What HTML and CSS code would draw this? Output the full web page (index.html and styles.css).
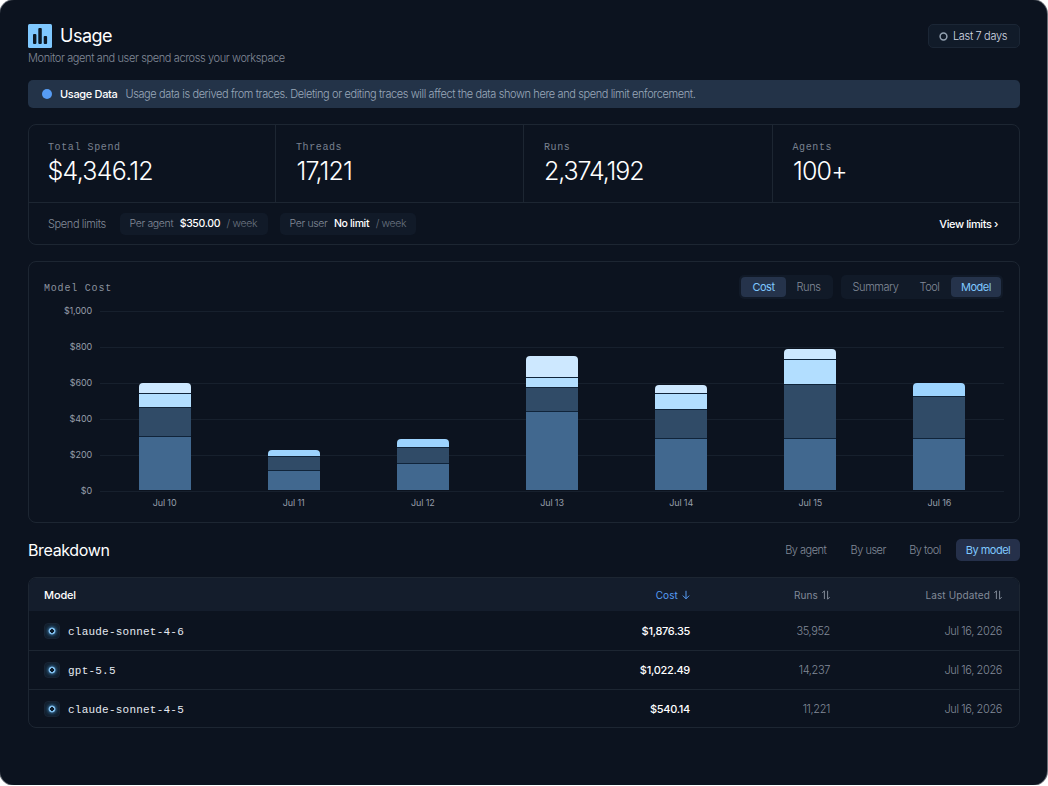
FILE: index.html
```html
<!DOCTYPE html>
<html lang="en">
<head>
<meta charset="utf-8">
<title>Usage</title>
<link rel="stylesheet" href="styles.css">
</head>
<body>
<main class="app">
  <header class="page-head">
    <div>
      <div class="title-row">
        <svg class="logo" viewBox="0 0 24 24"><rect width="24" height="24" rx="1.5" fill="#7fc8ff"/><g fill="#0b1825"><rect x="5" y="10" width="3.4" height="10" rx="1"/><rect x="10.3" y="4" width="3.5" height="16" rx="1"/><rect x="15.7" y="12" width="3.4" height="8" rx="1"/></g></svg>
        <h1 class="title">Usage</h1>
      </div>
      <p class="subtitle">Monitor agent and user spend across your workspace</p>
    </div>
    <button class="range"><svg class="ring" viewBox="0 0 9 9"><circle cx="4.5" cy="4.5" r="3.4"/></svg>Last 7 days</button>
  </header>

  <section class="banner"><i class="dot"></i><b>Usage Data</b><span>Usage data is derived from traces. Deleting or editing traces will affect the data shown here and spend limit enforcement.</span></section>

  <section class="card stats">
    <div class="stat-grid">
      <div class="stat"><div class="label">Total Spend</div><div class="value">$4,346.12</div></div>
      <div class="stat"><div class="label">Threads</div><div class="value">17,121</div></div>
      <div class="stat"><div class="label">Runs</div><div class="value tight">2,374,192</div></div>
      <div class="stat"><div class="label">Agents</div><div class="value">100+</div></div>
    </div>
    <div class="limits">
      <span class="limits-label">Spend limits</span>
      <div class="chip chip-agent"><span>Per agent</span><b>$350.00</b><em>/ week</em></div>
      <div class="chip chip-user"><span>Per user</span><b>No limit</b><em>/ week</em></div>
      <a class="view">View limits ›</a>
    </div>
  </section>

  <section class="card chart-card">
    <div class="chart-head">
      <h2 class="chart-title">Model Cost</h2>
      <div class="seg seg-metric"><span class="on">Cost</span><span>Runs</span></div>
      <div class="seg seg-group"><span>Summary</span><span>Tool</span><span class="on">Model</span></div>
    </div>
    <div class="chart">
      <div class="axis"><span>$1,000</span><span>$800</span><span>$600</span><span>$400</span><span>$200</span><span>$0</span></div>
      <div class="plot">
        <div class="col"><div class="bar"><i class="s4" style="height:10px"></i><i class="s3" style="height:14px"></i><i class="s2" style="height:29px"></i><i class="s1" style="height:54px"></i></div><span>Jul 10</span></div>
        <div class="col"><div class="bar"><i class="s0" style="height:6.5px"></i><i class="s2" style="height:14px"></i><i class="s1" style="height:20px"></i></div><span>Jul 11</span></div>
        <div class="col"><div class="bar"><i class="s0" style="height:8.5px"></i><i class="s2" style="height:16px"></i><i class="s1" style="height:27px"></i></div><span>Jul 12</span></div>
        <div class="col"><div class="bar"><i class="s4" style="height:21px"></i><i class="s3" style="height:10px"></i><i class="s2" style="height:24px"></i><i class="s1" style="height:79px"></i></div><span>Jul 13</span></div>
        <div class="col"><div class="bar"><i class="s4" style="height:8.5px"></i><i class="s3" style="height:16px"></i><i class="s2" style="height:29px"></i><i class="s1" style="height:52px"></i></div><span>Jul 14</span></div>
        <div class="col"><div class="bar"><i class="s4" style="height:10.5px"></i><i class="s3" style="height:25px"></i><i class="s2" style="height:54px"></i><i class="s1" style="height:52px"></i></div><span>Jul 15</span></div>
        <div class="col"><div class="bar"><i class="s0" style="height:13.5px"></i><i class="s2" style="height:42px"></i><i class="s1" style="height:52px"></i></div><span>Jul 16</span></div>
      </div>
    </div>
  </section>

  <div class="break-head">
    <h2 class="break-title">Breakdown</h2>
    <nav class="tabs"><span>By agent</span><span>By user</span><span>By tool</span><span class="on">By model</span></nav>
  </div>

  <section class="card table">
    <div class="row thead">
      <b>Model</b>
      <span class="cost sorted">Cost<svg class="arrow" viewBox="0 0 8 10"><path d="M4 .8v8M.8 5.6L4 8.8l3.2-3.2"/></svg></span>
      <span class="runs">Runs<svg class="arrow" viewBox="0 0 8 10"><path d="M2.4 9V.8M.3 2.9L2.4.8M5.6.8V9.2M7.7 7.1L5.6 9.2"/></svg></span>
      <span class="date">Last Updated<svg class="arrow" viewBox="0 0 8 10"><path d="M2.4 9V.8M.3 2.9L2.4.8M5.6.8V9.2M7.7 7.1L5.6 9.2"/></svg></span>
    </div>
    <div class="row"><span class="name"><i class="model-icon"></i><span>claude-sonnet-4-6</span></span><span class="cost">$1,876.35</span><span class="runs">35,952</span><span class="date">Jul 16, 2026</span></div>
    <div class="row"><span class="name"><i class="model-icon"></i><span>gpt-5.5</span></span><span class="cost">$1,022.49</span><span class="runs">14,237</span><span class="date">Jul 16, 2026</span></div>
    <div class="row"><span class="name"><i class="model-icon"></i><span>claude-sonnet-4-5</span></span><span class="cost">$540.14</span><span class="runs">11,221</span><span class="date">Jul 16, 2026</span></div>
  </section>
</main>
</body>
</html>
```
FILE: styles.css
```css
* { box-sizing: border-box; }
body { margin: 0; background: #fff; font-family: Inter, "Liberation Sans", sans-serif; }
h1, h2, p { margin: 0; font-weight: 400; }
i, em { font-style: normal; }
b { font-weight: 500; }

.app {
  width: 1047px; height: 785px; padding: 24px 27px 0 28px;
  background: #0c131f; border-radius: 14px;
  box-shadow: 0 0 0 1px #6b7078;
  color: #828a98; font-size: 11px; line-height: 14px; letter-spacing: -0.38px;
}

.page-head { display: flex; justify-content: space-between; align-items: flex-start; height: 56px; }
.title-row { display: flex; align-items: center; gap: 8px; height: 24px; }
.logo { width: 24px; height: 24px; }
.title { font-size: 18px; line-height: 24px; color: #fff; letter-spacing: -0.5px; }
.subtitle { margin-top: 3px; font-weight: 300; }
.range {
  display: flex; align-items: center; gap: 5px; height: 24px; width: 92px; padding: 0 0 0 10px;
  border: 1px solid #1b2635; border-radius: 5px; background: #111b29;
  font: 300 11px/14px Inter, sans-serif; color: #d3d9e3; letter-spacing: -0.35px;
}
.ring { width: 9px; height: 9px; fill: none; stroke: #93a0b0; stroke-width: 1.5; }

.banner {
  display: flex; align-items: center; height: 28px; padding-left: 14px;
  background: #233348; border-radius: 5px; color: #9aa8ba; font-weight: 300; letter-spacing: -0.39px;
}
.banner b { margin: 0 8px; color: #fff; letter-spacing: -0.33px; }
.dot { width: 10px; height: 10px; border-radius: 50%; background: #569cf4; }

.card { border: 1px solid #1d2632; border-radius: 8px; }
.stats { margin-top: 16px; height: 121px; }
.stat-grid { display: grid; grid-template-columns: 246px 248px 249px 1fr; height: 78px; border-bottom: 1px solid #1d2632; }
.stat { padding: 17px 0 0 20px; border-left: 1px solid #1d2632; }
.stat:first-child { padding-left: 19px; border-left: 0; }
.stat:last-child { padding-left: 19.5px; }
.label, .chart-title { font-family: "Liberation Mono", monospace; font-size: 10px; line-height: 12px; letter-spacing: 0.6px; color: #79818f; }
.value { font-size: 25px; line-height: 30px; margin: 2px 0 0 0.5px; font-weight: 300; color: #fff; letter-spacing: -0.85px; }
.stat:first-child .value { margin-left: -0.5px; letter-spacing: -0.75px; }
.value.tight { letter-spacing: -1.1px; margin-left: 0; }
.limits { display: flex; align-items: center; height: 41px; padding: 0 21px 0 19px; }
.limits-label { width: 72px; font-weight: 300; }
.chip { display: flex; align-items: center; gap: 6.5px; height: 22px; padding-left: 9.5px; border-radius: 5px; background: #111a28; font-size: 10.5px; font-weight: 300; letter-spacing: -0.35px; white-space: nowrap; }
.chip b { color: #fff; }
.chip em { color: #69727f; }
.chip-agent { width: 148px; margin-right: 12px; }
.chip-user { width: 136px; }
.view { margin-left: auto; color: #fff; font-weight: 500; letter-spacing: -0.4px; }

.chart-card { margin-top: 16px; height: 262px; padding: 13px 16px 0 15px; }
.chart-head { display: flex; align-items: center; height: 24px; }
.chart-title { margin: 3px auto 0 0; letter-spacing: 0.8px; color: #8b929e; }
.seg { display: flex; height: 24px; padding: 2px; border-radius: 5px; background: #111a28; }
.seg > span { display: flex; align-items: center; justify-content: center; border-radius: 4px; font-weight: 300; letter-spacing: -0.45px; }
.seg > .on { background: #25334b; color: #7fc8ff; font-weight: 400; }
.seg-metric { width: 94px; margin-right: 8px; }
.seg-metric > span { width: 45px; }
.seg-group { width: 162px; }
.seg-group > span:nth-child(1) { width: 65px; }
.seg-group > span:nth-child(2) { width: 43px; }
.seg-group > span:nth-child(3) { width: 50px; }

.chart { display: flex; margin-top: 6px; font-size: 9px; line-height: 12px; letter-spacing: -0.12px; color: #969da9; }
.axis { display: flex; flex: none; flex-direction: column; gap: 24px; width: 48px; margin-right: 8px; text-align: right; }
.plot {
  display: flex; flex: none; width: 904px; height: 187px; margin-top: 6px;
  background: repeating-linear-gradient(#17202d 0 1px, transparent 1px 36px);
}
.col { flex: 1; display: flex; flex-direction: column; align-items: center; height: 198px; }
.col span { margin-top: 7px; line-height: 12px; }
.bar { display: flex; flex-direction: column; justify-content: flex-end; flex: none; width: 52px; height: 179px; }
.bar i { flex: none; border-top: 1px solid #10243a; }
.bar i:first-child { border-top: 0; border-radius: 4px 4px 0 0; }
.s0 { background: #9dd4ff; }
.s1 { background: #41688f; }
.s2 { background: #304b67; }
.s3 { background: #b2deff; }
.s4 { background: #cde8ff; }

.break-head { display: flex; align-items: center; justify-content: space-between; height: 22px; margin: 16px 0; }
.break-title { margin-top: -1px; font-size: 16px; line-height: 20px; color: #fff; letter-spacing: -0.35px; }
.tabs { display: flex; font-weight: 300; letter-spacing: -0.5px; }
.tabs > span { display: flex; align-items: center; justify-content: center; height: 22px; border-radius: 5px; }
.tabs > span:nth-child(1) { width: 67.5px; }
.tabs > span:nth-child(2) { width: 57.5px; }
.tabs > span:nth-child(3) { width: 56px; margin-right: 3px; }
.tabs > .on { width: 64px; background: #25304a; color: #7fc8ff; font-weight: 400; }

.table { height: 151px; overflow: hidden; }
.row { display: grid; grid-template-columns: 1fr 160px 140px 172px; align-items: center; height: 39px; padding: 0 17px 0 15px; border-top: 1px solid #1d2632; font-weight: 300; }
.thead { height: 33px; border: 0; background: #141d2c; letter-spacing: 0.13px; font-size: 10px; font-weight: 400; }
.thead + .row { border-top-color: transparent; }
.thead b { color: #fff; font-size: 11px; letter-spacing: -0.15px; }
.thead .arrow { width: 8px; height: 10px; margin-left: 4px; vertical-align: -1.5px; fill: none; stroke: currentColor; stroke-width: 1; }
.name { display: flex; align-items: center; gap: 8px; font: 11px/14px "Liberation Mono", monospace; letter-spacing: 0.22px; color: #e4e9f0; }
.name span { padding-top: 2px; }
.model-icon { display: block; width: 16px; height: 16px; border-radius: 4px; border: 1px solid #182434; background: radial-gradient(circle, #0c1a28 0 1.6px, #7fbdec 2.1px 3px, #234766 3.9px, #142739 6px, #111e2d 8px); }
.cost, .runs, .date { text-align: right; }
.cost { color: #fff; font-weight: 500; letter-spacing: -0.3px; }
.thead .sorted { color: #569cf4; font-weight: 400; letter-spacing: 0.13px; }
```
